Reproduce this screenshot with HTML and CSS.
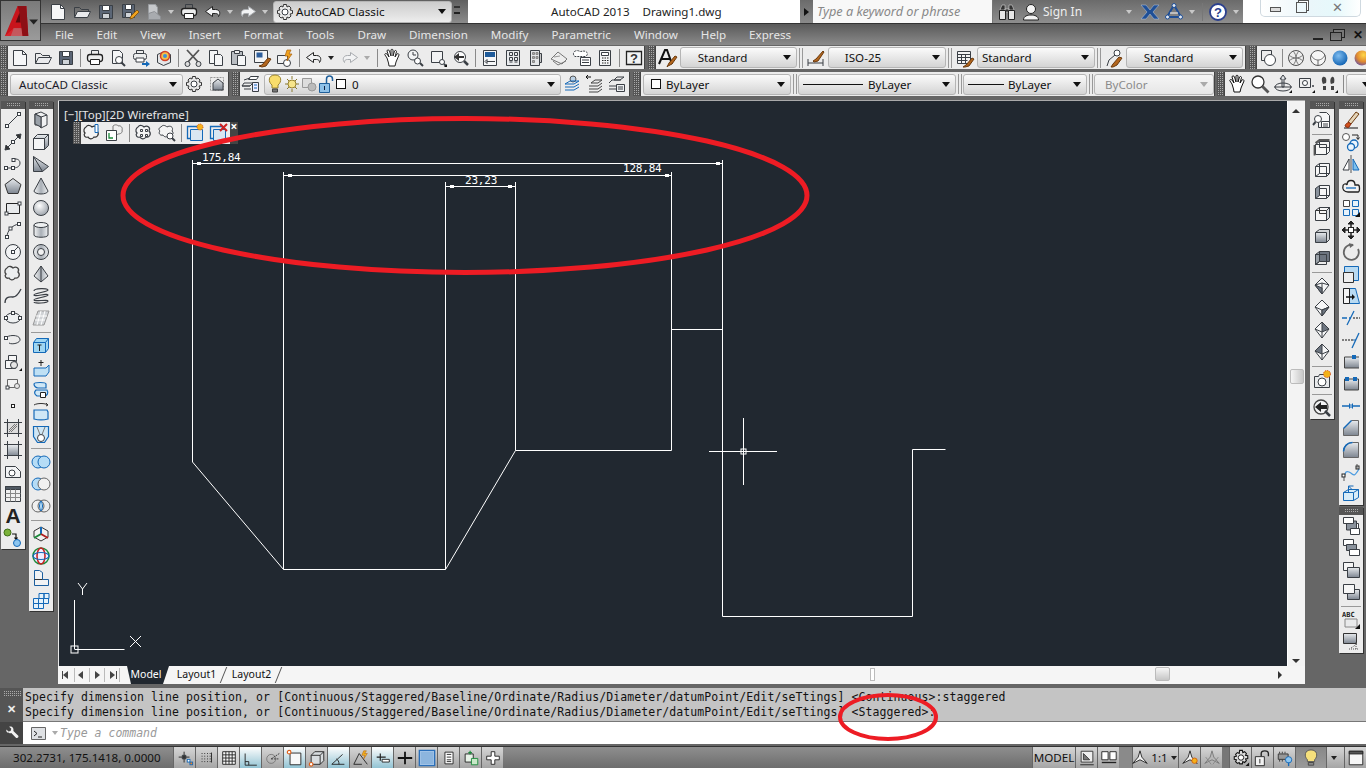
FILE: index.html
```html
<!DOCTYPE html>
<html lang="en">
<head>
<meta charset="utf-8">
<title>AutoCAD 2013 - Drawing1.dwg</title>
<link rel="stylesheet" href="styles.css">
</head>
<body>
<svg class="defs" aria-hidden="true">
<defs>
<linearGradient id="gm" x1="0" y1="0" x2="0" y2="1"><stop offset="0" stop-color="#e8ebee"/><stop offset="1" stop-color="#7d8590"/></linearGradient>
<linearGradient id="gh" x1="0" y1="0" x2="1" y2="0"><stop offset="0" stop-color="#f4f5f6"/><stop offset=".5" stop-color="#a9afb6"/><stop offset="1" stop-color="#eef0f2"/></linearGradient>
<radialGradient id="gs" cx=".4" cy=".35" r=".7"><stop offset="0" stop-color="#fff"/><stop offset="1" stop-color="#9aa1a9"/></radialGradient>
<radialGradient id="gb" cx=".4" cy=".35" r=".7"><stop offset="0" stop-color="#7fbdf0"/><stop offset="1" stop-color="#0d5fb0"/></radialGradient>
<radialGradient id="go" cx=".6" cy=".3" r=".8"><stop offset="0" stop-color="#ffd84a"/><stop offset=".55" stop-color="#e08a30"/><stop offset="1" stop-color="#5a4ab0"/></radialGradient>
<symbol id="new" viewBox="0 0 20 20"><path d="M3.500 2.500h9l4 4v11h-13z" fill="#f5f6f7"/><path d="M12.500 2.500v4h4"/></symbol>
<symbol id="open" viewBox="0 0 20 20"><path d="M2.500 15.500v-10h5l2 2h7v2"/><path d="M2.500 15.500l3-6h13l-3 6z" fill="#e9eaec"/></symbol>
<symbol id="save" viewBox="0 0 20 20"><path d="M3.500 3.500h13v13h-13z" fill="#5b6676"/><path d="M6.500 3.500h7v5h-7z" fill="#fff"/><path d="M6.500 11.500h7v5h-7z" fill="#cfd3d8"/></symbol>
<symbol id="saveas" viewBox="0 0 20 20"><path d="M2.500 2.500h12v13h-12z" fill="#5b6676"/><path d="M5.500 2.500h6v5h-6z" fill="#fff"/><path d="M5.500 10.500h6v5h-6z" fill="#cfd3d8"/><path d="M10 17l1-3 6-6 2 2-6 6z" fill="#f0a21e" stroke="#8a5a10"/></symbol>
<symbol id="plotg" viewBox="0 0 20 20"><path d="M4.500 2.500h7l2 3v6h-9z" fill="#c6c8cb" stroke="#9a9da1"/><path d="M4.500 17.500v-6l6-2 6 5v3z" fill="#a8abaf" stroke="#8e9195"/></symbol>
<symbol id="print" viewBox="0 0 20 20"><path d="M6.500 6.500v-4h7v4"/><rect x="2.500" y="6.500" width="15" height="7" rx="2.500" fill="#eceded" stroke="#222" stroke-width="1.300"/><path d="M5.500 11.500h9v5h-9z" fill="#fff" stroke="#222"/></symbol>
<symbol id="preview" viewBox="0 0 20 20"><path d="M4.500 2.500h7l3 3v10h-10z" fill="#f5f6f7"/><circle cx="11" cy="12" r="3.500" fill="#fff"/><path d="M13.500 14.500l3.500 3.500" stroke-width="2"/></symbol>
<symbol id="plot" viewBox="0 0 20 20"><path d="M5.500 5.500v-3h7v3"/><rect x="2.500" y="5.500" width="13" height="6" rx="2" fill="#eceded"/><path d="M5 10h8v4H5z" fill="#fff"/><path d="M11 15h4v-2l4 3-4 3v-2h-4z" fill="#1469b8" stroke="none"/></symbol>
<symbol id="d3" viewBox="0 0 20 20"><path d="M3.500 6.500l7-3 6 3v8l-7 3-6-3z" fill="#e4e6e8"/><circle cx="11" cy="8" r="4.500" fill="#f6c14a" stroke="#d2412a" stroke-width="1.500"/><circle cx="11" cy="8" r="2" fill="#3f8fd6" stroke="none"/></symbol>
<symbol id="cut" viewBox="0 0 20 20"><path d="M4 2l12 13M16 2L4 15" stroke="#555" stroke-width="1.800"/><circle cx="4.500" cy="16" r="2.500" fill="#ddd"/><circle cx="15.500" cy="16" r="2.500" fill="#ddd"/></symbol>
<symbol id="copy" viewBox="0 0 20 20"><path d="M3.500 2.500h8v13h-8z" fill="#f5f6f7"/><path d="M8.500 6.500h6l2 2v9h-8z" fill="#f5f6f7"/></symbol>
<symbol id="paste" viewBox="0 0 20 20"><path d="M2.500 3.500h11v13h-11z" fill="#b9bdc2"/><path d="M5.500 2.500h5v3h-5z" fill="#eee"/><path d="M8.500 7.500h7l1 1v9h-8z" fill="#f5f6f7"/></symbol>
<symbol id="match" viewBox="0 0 20 20"><path d="M2.500 2.500h13v12h-13z" fill="#f4f4f4"/><path d="M4.500 4.500h6v5h-6z" fill="#2f5f9c" stroke="none"/><path d="M7 18l3-1 6-7 3 1-5 7-4 1z" fill="#b3661d" stroke="#6b3a0e"/></symbol>
<symbol id="block" viewBox="0 0 20 20"><path d="M2.500 7.500h10v8h-10z" fill="#f2f2f2"/><circle cx="12" cy="15" r="3.500" fill="#fff"/><path d="M12 2l-2 6h3l-1 5 5-7h-3l2-4z" fill="#f0a21e" stroke="#a8600f" stroke-width=".7"/></symbol>
<symbol id="undo" viewBox="0 0 20 20"><path d="M9.500 4.500l-7 5 7 5v-3h3c3 0 3 2 3 3 2-2 2-7-3-7h-3z" fill="#f2f3f4" stroke="#222"/></symbol>
<symbol id="redo" viewBox="0 0 20 20"><path d="M10.500 4.500l7 5-7 5v-3h-3c-3 0-3 2-3 3-2-2-2-7 3-7h3z" fill="#f2f3f4" stroke="#a8abaf"/></symbol>
<symbol id="pan" viewBox="0 0 20 20"><path d="M5 10L3 7c-1-1 1-2 2-1l2 3-2-6c0-1.500 2-1.500 2.500 0L9 8V2c0-1 2-1 2 0v6l1.500-5c.5-1 2-.5 2 .5L13 9l2-3c1-1 2 0 2 1l-3 7-1 4H7l-.5-3z" fill="#fff" stroke="#222"/></symbol>
<symbol id="zrt" viewBox="0 0 20 20"><circle cx="8" cy="7" r="5" fill="#f2f3f4"/><path d="M8 4v3h3"/><circle cx="12.500" cy="13" r="3" fill="#fff"/><path d="M15 15l3 3" stroke-width="2"/></symbol>
<symbol id="zwin" viewBox="0 0 20 20"><path d="M3.500 3.500h11v11h-11z" fill="#f2f3f4"/><circle cx="14" cy="14" r="2.500" fill="#fff"/><path d="M16 16l2 2" stroke-width="2"/><path d="M16 19h3v-3z" fill="#111" stroke="none"/></symbol>
<symbol id="zprev" viewBox="0 0 20 20"><circle cx="9" cy="9" r="5.500" fill="#fff"/><path d="M3 9l5-4v3h5v2H8v3z" fill="#333" stroke="none"/><path d="M13 13l4 4" stroke-width="2.500"/></symbol>
<symbol id="props" viewBox="0 0 20 20"><path d="M3.500 2.500h13v15h-13z" fill="#f6f7f8"/><path d="M5 4h10v5H5z" fill="#1f5b9a" stroke="none"/><path d="M7 13.500h8M5 13.500l2-2v4z"/></symbol>
<symbol id="dc" viewBox="0 0 20 20"><path d="M3.500 2.500h13v15h-13z" fill="#e9ebed"/><path d="M6.500 4.500h3v3h-3zM11.500 4.500h3v3h-3zM6.500 9.500h3v3h-3zM11.500 9.500h3v3h-3zM6.500 14h3M11.500 14h3"/></symbol>
<symbol id="tp" viewBox="0 0 20 20"><path d="M4.500 2.500h9v15h-9z" fill="#e4e6e8"/><path d="M6.500 4.500h2v2h-2zM10 4.500h2v2h-2zM6.500 8.500h2v2h-2zM10 8.500h2v2h-2zM6.500 12.500h2v2h-2z" fill="#aaa" stroke="#888"/><path d="M13.500 5.500h2v9h-2z" fill="#c8c8c8"/></symbol>
<symbol id="ssm" viewBox="0 0 20 20"><path d="M2 11l7-7 9 7-5 5z" fill="#eee" stroke="#777"/><path d="M4 13l5 4 8-4" stroke="#777"/><path d="M5 9l6-1" stroke="#999"/></symbol>
<symbol id="mark" viewBox="0 0 20 20"><path d="M2.500 3.500c3-2 5 0 6 0 2 0 3-1 5 0 3 1 2 4 0 5H3c-2-1-2-4-.5-5z" fill="#fff" stroke-dasharray="2 1"/><path d="M8.500 9.500h10v8h-10z" fill="#fff"/><path d="M10 12h7M10 14.500h7" /></symbol>
<symbol id="calc" viewBox="0 0 20 20"><path d="M4.500 2.500h11v15h-11z" fill="#f3f4f5"/><path d="M6.500 4.500h7v3h-7z" fill="#fff"/><path d="M7 10h1.500M9.500 10H11M12 10h1.500M7 12.500h1.500M9.500 12.500H11M12 12.500h1.500M7 15h1.500M9.500 15H11M12 15h1.500" stroke="#222"/></symbol>
<symbol id="help" viewBox="0 0 20 20"><path d="M2.500 3.500h15v13h-15z" fill="#f1f2f3" stroke="#222" stroke-width="1.300"/><text x="10" y="15" class="svt" font-size="13" font-weight="700" text-anchor="middle" fill="#333" stroke="none">?</text></symbol>
<symbol id="txts" viewBox="0 0 20 20"><path d="M1 16L7 2h2l5 14M4 11h8" stroke="#111" stroke-width="2"/><path d="M9 19l2-4 6-7 2 1-5 7-4 2z" fill="#b3661d" stroke="#6b3a0e"/></symbol>
<symbol id="dims" viewBox="0 0 20 20"><path d="M2 11v7M17 11v7M2 15h15" /><path d="M7 13l3-2 7-8 1 1-6 9-4 1z" fill="#b3661d" stroke="#6b3a0e"/></symbol>
<symbol id="tbls" viewBox="0 0 20 20"><path d="M2.500 3.500h13v12h-13zM2.500 6.500h13M2.500 9.500h13M2.500 12.500h10M6.500 6.500v9M10.500 6.500v9" fill="#f4f4f4"/><path d="M8 19l3-2 6-7 2 1-5 7-4 1z" fill="#b3661d" stroke="#6b3a0e"/></symbol>
<symbol id="mls" viewBox="0 0 20 20"><circle cx="13" cy="5" r="3" fill="#fff"/><path d="M11 7L5 12l-2 6"/><path d="M7 19l2-3 6-7 3 1-5 7-4 2z" fill="#b3661d" stroke="#6b3a0e"/></symbol>
<symbol id="vis" viewBox="0 0 20 20"><path d="M3.500 2.500h10v10h-10z"/><circle cx="12" cy="12" r="5.500" fill="#fff"/></symbol>
<symbol id="wire" viewBox="0 0 20 20"><circle cx="10" cy="10" r="7.500" fill="#eee" stroke="#555"/><path d="M3 7c4 4 10 4 14 0M3 13c4-4 10-4 14 0M7 3c4 4 4 10 0 14M13 3c-4 4-4 10 0 14" stroke="#777"/></symbol>
<symbol id="hid" viewBox="0 0 20 20"><circle cx="10" cy="10" r="7.500" fill="#f6f6f6" stroke="#555"/><path d="M3 7c2 4 5 5 7 5s5-1 7-5M10 12v5" stroke="#666"/></symbol>
<symbol id="sph" viewBox="0 0 20 20"><circle cx="10" cy="10" r="7.500" fill="url(#gb)" stroke="none"/></symbol>
<symbol id="sph2" viewBox="0 0 20 20"><circle cx="10" cy="10" r="7.500" fill="url(#go)" stroke="none"/></symbol>
<symbol id="gearg" viewBox="0 0 20 20"><circle cx="10" cy="10" r="3" fill="#fff"/><path d="M8.500 2.500h3l.5 2.500 2-1 2 2-1 2 2.500.5v3l-2.500.5 1 2-2 2-2-1-.5 2.500h-3L8 15l-2 1-2-2 1-2-2.500-.5v-3L5 8 4 6l2-2 2 1z" stroke="#333" fill="#e8e8e8"/><circle cx="10" cy="10" r="3" fill="#fff"/></symbol>
<symbol id="wsp" viewBox="0 0 20 20"><path d="M3.500 3.500h13v13h-13z" stroke="#999" stroke-dasharray="2 1"/><path d="M6 16V9l5-4 5 4v7z" fill="url(#gm)"/></symbol>
<symbol id="lay" viewBox="0 0 20 20"><path d="M9.500 2.500h8l-2 3h-8z" fill="#fff"/><path d="M3 6l6-2M3 9h9l-3 3H1zM1 12h8M3 15h7" /><path d="M11.500 8.500h6v9h-6z" fill="#eef"/><path d="M13 11h3M13 14h3" stroke="#1469b8"/></symbol>
<symbol id="bulb" viewBox="0 0 16 20"><path d="M8 1c-7 0-7 7-3 10v3h6v-3c4-3 4-10-3-10z" fill="#f9dd6c" stroke="#9a8430"/><path d="M5.500 15h5v3h-5z" fill="#777" stroke="#444"/></symbol>
<symbol id="sun" viewBox="0 0 16 20"><circle cx="8" cy="10" r="4" fill="#f7e58c" stroke="#9a8430"/><path d="M8 2v3M8 15v3M1 10h3M12 10h3M3 5l2 2M13 5l-2 2M3 15l2-2M13 15l-2-2" stroke="#8a7a30"/></symbol>
<symbol id="frz" viewBox="0 0 16 20"><path d="M1.500 4.500h9v9h-9z" stroke="#999" fill="#ddd"/><circle cx="11" cy="13" r="4" fill="#bbb" stroke="#999"/></symbol>
<symbol id="lock" viewBox="0 0 16 20"><path d="M1.500 9.500h10v9h-10z" fill="#8ec1e8" stroke="#1f5f9a"/><path d="M8.500 9V5c0-4 6-4 6 0v2" stroke="#1f5f9a" stroke-width="1.500"/><path d="M6.500 12v4" stroke="#124"/></symbol>
<symbol id="lmk" viewBox="0 0 20 20"><circle cx="11" cy="5" r="3" fill="#bcd2e6" stroke="#555"/><path d="M3 10l5-3h9l-5 3zM3 13h9l5-3M3 16h9l5-3" stroke="#1469b8" fill="none"/></symbol>
<symbol id="lprev" viewBox="0 0 20 20"><path d="M2 3h5M2 3l2-2M2 3l2 2" stroke="#111"/><path d="M7 9l4-3h7l-4 3zM5 12h9l4-3M5 15h9l4-3M5 18h9l4-3" stroke="#444"/></symbol>
<symbol id="lst" viewBox="0 0 20 20"><path d="M8 6l3-3h7l-4 3zM3 9l3-3h9M3 12h7M3 15h7"/><path d="M10.500 10.500h8v7h-8z" fill="#eef0f2"/><path d="M12 13h5M12 15h5"/></symbol>
<symbol id="pan2" viewBox="0 0 20 20"><path d="M5 10L3 7c-1-1 1-2 2-1l2 3-2-6c0-1.500 2-1.500 2.500 0L9 8V2c0-1 2-1 2 0v6l1.500-5c.5-1 2-.5 2 .5L13 9l2-3c1-1 2 0 2 1l-3 7-1 4H7l-.5-3z" fill="#fff" stroke="#111"/></symbol>
<symbol id="zm" viewBox="0 0 20 20"><circle cx="8" cy="8" r="6" fill="#fff" stroke="#333" stroke-width="1.300"/><path d="M12.500 12.500l6 6" stroke="#555" stroke-width="2.800"/></symbol>
<symbol id="orb" viewBox="0 0 20 20"><path d="M10 1l-3 4h2v8h2V5h2z" fill="#dfe2e5"/><ellipse cx="10" cy="13" rx="8" ry="4"/><path d="M1 13h18"/><path d="M16 19h3v-3z" fill="#111" stroke="none"/></symbol>
<symbol id="cam" viewBox="0 0 20 20"><path d="M3.500 4.500h11v9h-11z" fill="#f0f0f0"/><circle cx="9" cy="9" r="2.500" fill="#fff"/><path d="M16 12h2M17 11v2"/><path d="M16 19h3v-3z" fill="#111" stroke="none"/></symbol>
<symbol id="feet" viewBox="0 0 20 20"><path d="M4 3c3-1 4 3 3 6l-3 1c-1-2-2-6 0-7zM13 3c2-1 3 3 2 6l-3 1c-1-2-1-6 1-7zM4 12h3v4H4zM12 12h3v4h-3z" fill="#444" stroke="none"/><path d="M16 19h3v-3z" fill="#111" stroke="none"/></symbol>
<symbol id="rc1" viewBox="0 0 20 20"><path d="M4 4c2-3 5-1 6 0 3-2 7 0 5 4 3 3 0 7-3 6-2 3-5 2-6 0-3 1-5-2-3-4-2-2-1-5 1-6z" fill="#f4f4f4" stroke="#333" stroke-width="1.200"/><path d="M13 1.500h3v8h-3z" fill="#fff" stroke="#1469b8"/></symbol>
<symbol id="rc2" viewBox="0 0 20 20"><path d="M8 3c2-2 5-1 5 0 3-1 5 2 4 4 1 3-2 4-4 4-2 2-5 1-5 0z" fill="#eee" stroke="#777"/><path d="M1.500 7.500h10v10h-10z" fill="#fff"/><path d="M4 10v5h4" stroke="#1a8a3a" stroke-width="1.300"/></symbol>
<symbol id="rc3" viewBox="0 0 20 20"><path d="M4 4c2-3 5-1 6 0 3-2 7 0 5 4 3 3 0 7-3 6-2 3-5 2-6 0-3 1-5-2-3-4-2-2-1-5 1-6z" fill="#f4f4f4" stroke-width="1.200"/><path d="M6.500 6.500h2v2h-2zM11.500 6.500h2v2h-2zM6.500 11.500h2v2h-2zM11.500 11.500h2v2h-2z"/></symbol>
<symbol id="rc4" viewBox="0 0 20 20"><path d="M4 4c2-3 5-1 6 0 3-2 7 0 5 4 3 3-1 5-3 4-2 3-5 2-6 0-3 1-5-2-3-4-2-2-1-3 1-4z" fill="#f4f4f4"/><circle cx="13" cy="13" r="3" fill="#fff"/><path d="M15 15l3 3" stroke-width="2"/></symbol>
<symbol id="vp1" viewBox="0 0 20 20"><path d="M1.500 3.500h12v12h-12z" stroke="#1469b8" stroke-width="1.300"/><path d="M4.500 6.500h12v11h-12z" fill="#d9e6f2" stroke="#1469b8"/><circle cx="14" cy="4" r="3" fill="#f6b21a" stroke="#d0501a" stroke-dasharray="1 1"/></symbol>
<symbol id="vp2" viewBox="0 0 20 20"><path d="M1.500 3.500h12v12h-12z" stroke="#1469b8" stroke-width="1.300"/><path d="M4.500 6.500h12v11h-12z" fill="#d9e6f2" stroke="#1469b8"/><path d="M11 1l7 7M18 1l-7 7" stroke="#cc2222" stroke-width="2"/></symbol>
<symbol id="line" viewBox="0 0 20 20"><path d="M4 16L16 4"/><rect x="2.500" y="14.500" width="3" height="3" fill="#fff"/><rect x="14.500" y="2.500" width="3" height="3" fill="#fff"/></symbol>
<symbol id="xline" viewBox="0 0 20 20"><path d="M2 18L18 2"/><path d="M2 18l1-5 4 4zM18 2l-5 1 4 4z" fill="#333"/><rect x="8.500" y="8.500" width="3" height="3" fill="#fff"/></symbol>
<symbol id="pline" viewBox="0 0 20 20"><path d="M3 14h7c3 0 7-1 7-5s-5-5-7-3"/><rect x="1.500" y="12.500" width="3" height="3" fill="#fff"/><rect x="8.500" y="12.500" width="3" height="3" fill="#fff"/><rect x="9" y="4.500" width="3" height="3" fill="#fff"/></symbol>
<symbol id="poly" viewBox="0 0 20 20"><path d="M10 2.500l8 6-3 9H5l-3-9z" fill="url(#gm)" stroke="#333"/></symbol>
<symbol id="rect" viewBox="0 0 20 20"><path d="M3.500 5.500h13v10h-13z" fill="#e8eaec" stroke="#222"/><rect x="2" y="14" width="3" height="3" fill="#fff"/><rect x="15" y="4" width="3" height="3" fill="#fff"/></symbol>
<symbol id="arc" viewBox="0 0 20 20"><path d="M4 17c0-6 5-12 12-13"/><rect x="2.500" y="15.500" width="3" height="3" fill="#fff"/><rect x="6" y="7" width="3" height="3" fill="#fff"/><rect x="14.500" y="2.500" width="3" height="3" fill="#fff"/></symbol>
<symbol id="circ" viewBox="0 0 20 20"><circle cx="10" cy="10" r="7.500" fill="#f2f3f4"/><path d="M10 10l5-5"/><rect x="8.500" y="8.500" width="3" height="3" fill="#fff"/></symbol>
<symbol id="cloud" viewBox="0 0 20 20"><path d="M4 4c2-3 5-1 6 0 3-2 7 0 5 4 3 3 0 7-3 6-2 3-5 2-6 0-3 1-5-2-3-4-2-2-1-5 1-6z" fill="#eceeef" stroke="#444" stroke-width="1.300"/></symbol>
<symbol id="spl" viewBox="0 0 20 20"><path d="M2 17c0-7 5-6 8-6s6-4 8-8" stroke-width="1.300"/></symbol>
<symbol id="ell" viewBox="0 0 20 20"><ellipse cx="10" cy="10" rx="7.500" ry="5" fill="#eef0f1"/><rect x="1.500" y="8.500" width="3" height="3" fill="#fff"/><rect x="15.500" y="8.500" width="3" height="3" fill="#fff"/><rect x="8.500" y="3.500" width="3" height="3" fill="#fff"/></symbol>
<symbol id="earc" viewBox="0 0 20 20"><path d="M3 8c1-3 13-4 14 1 1 4-8 6-11 4"/><rect x="1.500" y="6.500" width="3" height="3" fill="#fff"/></symbol>
<symbol id="ins" viewBox="0 0 20 20"><path d="M5.500 3.500h8v6h-8z" fill="#f6f6f6"/><path d="M2.500 8.500h10v8h-10z" fill="#f6f6f6"/><circle cx="11" cy="13" r="3.500" fill="#e6e6e6"/><path d="M16 19h3v-3z" fill="#111" stroke="none"/></symbol>
<symbol id="mkb" viewBox="0 0 20 20"><path d="M4.500 5.500h10v8h-10z" fill="#f2f2f2" stroke="#666"/><circle cx="14" cy="12" r="2.500" fill="#e8e8e8" stroke="#666"/><rect x="3" y="12" width="3" height="3" fill="#fff"/></symbol>
<symbol id="pt" viewBox="0 0 20 20"><rect x="8.500" y="8.500" width="3" height="3" fill="#fff" stroke="#222"/></symbol>
<symbol id="hat" viewBox="0 0 20 20"><path d="M3 5h14v11H3z" fill="#dcdcdc" stroke="none"/><path d="M1 4.500h18M1 15.500h18M4.500 1v18M15.500 1v18"/><path d="M6 14l8-8M8 14l6-6M6 12l6-6" stroke="#777"/></symbol>
<symbol id="grd" viewBox="0 0 20 20"><path d="M4 5h12v11H4z" fill="url(#gm)" stroke="none"/><path d="M1 4.500h18M1 15.500h18M4.500 1v18M15.500 1v18"/></symbol>
<symbol id="reg" viewBox="0 0 20 20"><path d="M2.500 4.500h10l5 5v6h-15z" fill="#f3f4f5"/><circle cx="9" cy="11" r="3" fill="#fff"/></symbol>
<symbol id="tab" viewBox="0 0 20 20"><path d="M2.500 2.500h15v15h-15z" fill="#f0f0f0"/><path d="M2.500 2.500h15v3h-15z" fill="#4f5862"/><path d="M2.500 9.500h15M2.500 13.500h15M7.500 5.500v12M12.500 5.500v12" stroke="#888"/></symbol>
<symbol id="ad" viewBox="0 0 20 20"><circle cx="4.500" cy="4.500" r="3.500" fill="#7bb23a" stroke="#3e6e18"/><path d="M9 6h4v5M11.500 9.500l1.500 2 1.500-2" stroke="#111" stroke-width="1.200"/><circle cx="14" cy="15" r="3.500" fill="#8ec6f0" stroke="#1469b8"/></symbol>
<symbol id="m1" viewBox="0 0 20 20"><path d="M4 4l6-2 6 3v10l-6 3-2-3H4z" fill="#f0f1f2"/><path d="M10 7l6-2M10 7v11M4 4l6 3" /><path d="M4 4v10l6 3V7z" fill="#99a0a8"/></symbol>
<symbol id="box" viewBox="0 0 20 20"><path d="M2.500 6.500l4-4h11v11l-4 4h-11z" fill="url(#gm)"/><path d="M2.500 6.500h11v11M13.500 6.500l4-4"/><path d="M2.500 6.500h11v11h-11z" fill="#f4f5f6"/></symbol>
<symbol id="wdg" viewBox="0 0 20 20"><path d="M2.500 2.500l15 10-6 5h-9z" fill="url(#gm)"/><path d="M2.500 2.500l9 15"/></symbol>
<symbol id="cone" viewBox="0 0 20 20"><path d="M10 2L3 15a7 3 0 0 0 14 0z" fill="url(#gh)"/></symbol>
<symbol id="spr" viewBox="0 0 20 20"><circle cx="10" cy="10" r="7.500" fill="url(#gs)"/></symbol>
<symbol id="cyl" viewBox="0 0 20 20"><path d="M3 5v10c0 3 14 3 14 0V5" fill="url(#gh)"/><ellipse cx="10" cy="5" rx="7" ry="2.500" fill="#eef0f1"/></symbol>
<symbol id="tor" viewBox="0 0 20 20"><circle cx="10" cy="10" r="7.500" fill="url(#gh)"/><circle cx="10" cy="10" r="3.500" fill="#f2f2f2"/></symbol>
<symbol id="pyr" viewBox="0 0 20 20"><path d="M10 2L3 12l7 6 7-6z" fill="url(#gh)"/><path d="M10 2v16"/></symbol>
<symbol id="hel" viewBox="0 0 20 20"><path d="M3 5c0-3 14-3 14-1S3 7 3 9s14-2 14 0-14 3-14 5 14-1 14 1-14 3-14 1" stroke-width="1.200"/></symbol>
<symbol id="psf" viewBox="0 0 20 20"><path d="M7 3h11l-5 14H2z" fill="#d0d3d6" stroke="#999"/><path d="M5 8h11M4 12h10M10 3l-4 14M14 3l-4 14" stroke="#fff"/></symbol>
<symbol id="prs" viewBox="0 0 20 20"><path d="M2.500 6.500l3-4h12v10l-3 4h-12z" fill="#9fd6f2" stroke="#1469b8"/><path d="M2.500 6.500h12v10M14.500 6.500l3-4" stroke="#1469b8"/><path d="M8.500 15V9M6.500 9h4" stroke="#222"/></symbol>
<symbol id="ext" viewBox="0 0 20 20"><path d="M3 10h12l3-3v7l-3 4H3z" fill="#bfe0f4" stroke="#1469b8"/><path d="M10 8V2M7.500 4.500h5" stroke="#222"/></symbol>
<symbol id="swp" viewBox="0 0 20 20"><path d="M3 4c0-2 12-2 12 0v4H7c-2 0-4-2-4-4zM5 10h11c2 3 0 6-3 6H6c-3-2-3-4-1-6z" fill="#cfe7f6" stroke="#1469b8" stroke-width="1.200"/><path d="M9.500 12.500h5v5h-5z" fill="#fff" stroke="#222"/></symbol>
<symbol id="rev" viewBox="0 0 20 20"><path d="M3 3c3-2 11-2 14 0M15 1l2 2-2 1" stroke="#333"/><path d="M3 8h13l1 2v7c-4 1-10 1-14 0z" fill="#cfe7f6" stroke="#1469b8" stroke-width="1.200"/></symbol>
<symbol id="lft" viewBox="0 0 20 20"><path d="M2.500 2.500h15v10l-4 6h-7l-4-6z" fill="#cfe7f6" stroke="#1469b8" stroke-width="1.200"/><path d="M6 3l4 10 4-10" stroke="#777"/><circle cx="10" cy="14" r="3.500" fill="#fff"/></symbol>
<symbol id="uni" viewBox="0 0 20 20"><circle cx="7" cy="10" r="6" fill="#b5dcf6" stroke="#1469b8"/><circle cx="13" cy="10" r="6" fill="#b5dcf6" stroke="#1469b8"/></symbol>
<symbol id="sub" viewBox="0 0 20 20"><circle cx="7" cy="10" r="6" fill="#b5dcf6" stroke="#1469b8"/><circle cx="13" cy="10" r="6" fill="#f0f0f0" stroke="#666"/></symbol>
<symbol id="its" viewBox="0 0 20 20"><circle cx="7" cy="10" r="6" fill="#f0f0f0" stroke="#666"/><circle cx="13" cy="10" r="6" fill="none" stroke="#666"/><path d="M10 5c2 3 2 7 0 10-2-3-2-7 0-10z" fill="#b5dcf6" stroke="#1469b8"/></symbol>
<symbol id="gz3" viewBox="0 0 20 20"><path d="M10 3l7 4v6l-7 4-7-4V7z" stroke="#333" fill="#f2f2f2"/><path d="M10 10V3" stroke="#1469b8" stroke-width="2"/><path d="M10 10L3 14" stroke="#1a8a3a" stroke-width="2"/><path d="M10 10l7 4" stroke="#b02020" stroke-width="2"/></symbol>
<symbol id="gr3" viewBox="0 0 20 20"><circle cx="10" cy="10" r="8" stroke="#1a8a3a" stroke-width="1.500" fill="#eef"/><ellipse cx="10" cy="10" rx="4" ry="8" stroke="#c72020" stroke-width="1.500"/><ellipse cx="10" cy="10" rx="8" ry="3.500" stroke="#1469b8" stroke-width="1.200"/></symbol>
<symbol id="ply" viewBox="0 0 20 20"><path d="M3.500 2.500v15h14v-6h-6v-7l-3-2z" fill="#f2f3f4" stroke="#1d5f9e"/><path d="M3.500 11.500h8" stroke="#333"/></symbol>
<symbol id="arr3" viewBox="0 0 20 20"><path d="M2.500 8.500h5v5h-5zM7.500 8.500h5v5h-5zM2.500 13.500h5v5h-5zM7.500 13.500h5v5h-5zM8 3.500h5v5H8zM13 3.500h5v5h-5zM12.500 8.500h5v5h-5z" stroke="#1469b8" fill="#e5f2fb"/></symbol>
<symbol id="c1" viewBox="0 0 20 20"><path d="M3.500 6.500l4-3h10v10l-3 3h-11z" fill="#f6f6f6"/><path d="M7.500 3.500v6h10M3.500 6.500h11v10"/><path d="M2.500 7v10.500" stroke="#555" stroke-width="1.800"/><path d="M3.500 5l4-3h10" stroke="#555" stroke-width="1.800"/></symbol>
<symbol id="c2" viewBox="0 0 20 20"><path d="M3.500 6.500l4-3h10v10l-3 3h-11z" fill="#f6f6f6"/><path d="M7.500 3.500v10h10M3.500 6.500h11v10"/><path d="M3.500 16.500l4-3"/></symbol>
<symbol id="c3" viewBox="0 0 20 20"><path d="M7.500 3.500h10v10l-3 3h-11" fill="#f6f6f6"/><path d="M3.500 6.500h11v10M7.500 13.500h10"/><path d="M3.500 6.500l4-3v10l-4 3z" fill="#8a929c"/></symbol>
<symbol id="c4" viewBox="0 0 20 20"><path d="M3.500 6.500l4-3h10v10l-3 3h-11z" fill="#f6f6f6"/><path d="M3.500 6.500h11v10M14.500 6.500l3-3M7.500 3.500v6M7.500 9.500h7" stroke="#333"/><path d="M14.500 6.500l3-3v10l-3 3z" fill="#d9dcdf"/></symbol>
<symbol id="c5" viewBox="0 0 20 20"><path d="M3.500 6.500l4-3h10v10l-3 3z" fill="#d0d3d6"/><path d="M3.500 6.500h11v10h-11z" fill="url(#gm)"/></symbol>
<symbol id="c6" viewBox="0 0 20 20"><path d="M7.500 3.500h10v10h-10z" fill="#6d7580"/><path d="M3.500 6.500l4-3v10l-4 3z" fill="#9aa1a8"/><path d="M3.500 6.500h11v10h-11z"/><path d="M3.500 16.500l4-3"/></symbol>
<symbol id="i1" viewBox="0 0 20 20"><path d="M10 2l7 7-7 9-7-9z" fill="#f6f7f8"/><path d="M3 9l7-2 7 2M10 7v11"/><path d="M3 9l7 9V12z" fill="#6d7580"/></symbol>
<symbol id="i2" viewBox="0 0 20 20"><path d="M10 2l7 7-7 9-7-9z" fill="#f6f7f8"/><path d="M3 9l7 3 7-3M10 12v6"/><path d="M10 12l7-3-7 9z" fill="#6d7580"/></symbol>
<symbol id="i3" viewBox="0 0 20 20"><path d="M10 2l7 7-7 9-7-9z" fill="#f6f7f8"/><path d="M10 2l7 7-7 3z" fill="#6d7580"/><path d="M3 9l7 3v6"/></symbol>
<symbol id="i4" viewBox="0 0 20 20"><path d="M10 2l7 7-7 9-7-9z" fill="#f6f7f8"/><path d="M10 2L3 9l7 3z" fill="#6d7580"/><path d="M17 9l-7 3v6"/></symbol>
<symbol id="cam2" viewBox="0 0 20 20"><path d="M2.500 6.500h4l1-2h5l1 2h4v11h-15z" fill="#e8eaec"/><circle cx="10" cy="12" r="4" fill="#fff"/><circle cx="15" cy="4" r="3.500" fill="#f2b21a" stroke="#d0401a" stroke-dasharray="1 1"/></symbol>
<symbol id="navw" viewBox="0 0 20 20"><circle cx="9" cy="9" r="7" fill="#f2f3f4" stroke="#444" stroke-width="1.300"/><path d="M3 9l6-5v3h6v4H9v3z" fill="#222" stroke="none"/><path d="M13 13l5 5" stroke-width="2.500"/></symbol>
<symbol id="expl" viewBox="0 0 20 20"><path d="M7.500 2.500h7l3 3v12h-11v-5" fill="#f5f6f7"/><circle cx="6" cy="9" r="3.500" fill="#fff"/><path d="M3.500 12L1 15" stroke-width="2"/><path d="M9.500 11.500h8v6h-8z" fill="#fff"/><path d="M11 14h5M11 16h5"/></symbol>
<symbol id="brsh" viewBox="0 0 20 20"><path d="M3 18h14" stroke="#111"/><path d="M7 12l8-10 3 2-8 10z" fill="#e4d4b8" stroke="#6b3a0e"/><path d="M4 16c1-3 3-4 5-3l1 1-2 3c-1 1-3 0-4-1z" fill="#d0501a" stroke="#8a2a0e"/></symbol>
<symbol id="cpy2" viewBox="0 0 20 20"><circle cx="5" cy="5" r="3.500" fill="#fff" stroke="#555"/><circle cx="13" cy="12" r="4" fill="#eaf4fc" stroke="#1469b8" stroke-width="1.300"/><circle cx="10" cy="15" r="3.500" fill="#eaf4fc" stroke="#1469b8" stroke-width="1.300"/><path d="M11 3h6v4M15.500 5.500L17 7.500l1.500-2" stroke="#222"/></symbol>
<symbol id="mir" viewBox="0 0 20 20"><path d="M10 1v18" stroke="#555"/><path d="M8 5L2 16h6z" fill="#fff"/><path d="M12 5l6 11h-6z" fill="#7cc0ee" stroke="#1469b8"/></symbol>
<symbol id="ofs" viewBox="0 0 20 20"><path d="M2 10c0-2 3-3 4-1 0-6 8-6 8 0h3c2 0 2 7 0 7H7c-4 0-6-3-5-6z" fill="#f2f2f2" stroke="#222" stroke-width="1.300"/><path d="M5 12h10" stroke="#1469b8" stroke-width="1.300"/></symbol>
<symbol id="arry" viewBox="0 0 20 20"><path d="M2.500 2.500h6v6h-6z" fill="#fff" stroke="#444"/><path d="M11.500 2.500h6v6h-6zM2.500 11.500h6v6h-6zM11.500 11.500h6v6h-6z" fill="#e6f2fb" stroke="#1469b8"/><path d="M14 19h5v-5z" fill="#111" stroke="none"/></symbol>
<symbol id="move" viewBox="0 0 20 20"><path d="M10 1l-3 3h6zM10 19l-3-3h6zM1 10l3-3v6zM19 10l-3-3v6z" fill="#222" stroke="#222"/><path d="M10 4v12M4 10h12" stroke-width="1.500" stroke="#222"/><rect x="7.500" y="7.500" width="5" height="5" fill="#fff" stroke="#222"/></symbol>
<symbol id="rot" viewBox="0 0 20 20"><path d="M12 3a7.500 7.500 0 1 0 5 4" stroke="#666" stroke-width="1.800"/><path d="M8 1l5 2-4 3z" fill="#666" stroke="none"/></symbol>
<symbol id="scl" viewBox="0 0 20 20"><path d="M3.500 2.500h14v14H3.500z" fill="#b8daf2" stroke="#1469b8"/><path d="M2.500 8.500h10v10h-10z" fill="#eee" stroke="#333"/></symbol>
<symbol id="str" viewBox="0 0 20 20"><path d="M2.500 2.500h12l4 15h-16z" fill="#b8daf2" stroke="#1469b8"/><path d="M2.500 2.500h6v15h-6z" fill="#f4f4f4" stroke="#222"/><path d="M5 11h7" stroke="#111" stroke-width="1.500"/><path d="M11 8l3 3-3 3z" fill="#111" stroke="none"/></symbol>
<symbol id="trm" viewBox="0 0 20 20"><path d="M1 10h5M8 10h2" stroke="#1469b8" stroke-width="1.300"/><path d="M12 10h7" stroke="#111" stroke-dasharray="2 1"/><path d="M6 17L13 3" stroke="#1469b8" stroke-width="1.300"/></symbol>
<symbol id="ex" viewBox="0 0 20 20"><path d="M1 10h11" stroke="#111" stroke-dasharray="2 1"/><path d="M12 10h3" stroke="#1469b8"/><path d="M11 18L18 3" stroke="#1469b8" stroke-width="1.300"/></symbol>
<symbol id="br1" viewBox="0 0 20 20"><path d="M18 5H3.500v11H18" fill="url(#gm)" stroke="#444"/><rect x="11" y="3" width="4" height="4" fill="#1469b8" stroke="none"/></symbol>
<symbol id="br2" viewBox="0 0 20 20"><path d="M3.500 5h14v11h-14z" fill="url(#gm)" stroke="#444"/><rect x="4" y="3" width="4" height="4" fill="#1469b8" stroke="none"/><rect x="12" y="3" width="4" height="4" fill="#1469b8" stroke="none"/></symbol>
<symbol id="jn" viewBox="0 0 20 20"><path d="M1 10h7M12 10h7" stroke="#1469b8" stroke-width="1.300"/><path d="M8 7v6l3-3zM12 7v6l-3-3z" fill="#1469b8" stroke="none"/></symbol>
<symbol id="chm" viewBox="0 0 20 20"><path d="M2.500 17.500v-7l8-8h7v15z" fill="url(#gm)" stroke="#666"/><path d="M2.500 10.500l8-8" stroke="#1469b8" stroke-width="1.500"/></symbol>
<symbol id="flt" viewBox="0 0 20 20"><path d="M2.500 17.500v-6c0-5 4-9 9-9h6v15z" fill="url(#gm)" stroke="#666"/><path d="M2.500 11.500c0-5 4-9 9-9" stroke="#1469b8" stroke-width="1.500" fill="none"/></symbol>
<symbol id="bln" viewBox="0 0 20 20"><path d="M2 15c3-1 1-7 6-5s4 7 10-3" stroke="#4a9be0" stroke-width="1.300"/><rect x="1" y="12" width="3" height="3" fill="#fff" stroke="#222"/><rect x="15" y="4" width="3" height="3" fill="#fff" stroke="#222"/><path d="M3 15v4M16 2v5" stroke="#555"/></symbol>
<symbol id="exb" viewBox="0 0 20 20"><path d="M2.500 8.500l5-3h10v8l-5 3h-10z" fill="#d8ecf8" stroke="#1469b8"/><path d="M2.500 8.500h10v8M12.500 8.500l5-3M7.500 8.500V2h5M7.500 2l3 3" stroke="#1469b8"/></symbol>
<symbol id="o1" viewBox="0 0 20 20"><path d="M8.500 7.500h9v6h-9z" fill="#fff"/><path d="M5.500 5h10v9h-10z" fill="#8a929c"/><path d="M2.500 1.500h10v6h-10z" fill="#fff"/><path d="M9.500 12.500h9v6h-9z" fill="#fff"/></symbol>
<symbol id="o2" viewBox="0 0 20 20"><path d="M2.500 1.500h10v6h-10z" fill="#fff"/><path d="M5.500 6.500h10v6h-10z" fill="#8a929c"/><path d="M8.500 11.500h10v6h-10z" fill="#fff"/></symbol>
<symbol id="o3" viewBox="0 0 20 20"><path d="M2.500 2.500h10v8h-10z" fill="#f6f6f6"/><path d="M6.500 7.500h12v10h-12z" fill="url(#gm)"/></symbol>
<symbol id="o4" viewBox="0 0 20 20"><path d="M6.500 7.500h12v10h-12z" fill="url(#gm)"/><path d="M2.500 2.500h11v9h-11z" fill="#f6f6f6"/></symbol>
<symbol id="abc" viewBox="0 0 20 20"><text x="1" y="7" class="svm" font-size="7" font-weight="700" fill="#222" stroke="none">ABC</text><path d="M4 9h12v8H4z" fill="#e9eaeb" stroke="#888"/><path d="M14 19h5v-5z" fill="#111" stroke="none"/></symbol>
<symbol id="msk" viewBox="0 0 20 20"><path d="M2.500 1.500h13v10h-13z" fill="url(#gm)" stroke="#333"/><path d="M8 17h10M15 10v8M10 16l6-4" stroke="#555" stroke-dasharray="1 1"/></symbol>
<symbol id="bino" viewBox="0 0 20 20"><path d="M3 8l2-5h3v5zM12 8V3h3l2 5zM8 7h4v3H8z" fill="#333" stroke="#e8e8e8" stroke-width=".5"/><path d="M2.500 8.500h6v9h-6zM11.500 8.500h6v9h-6z" fill="#e6e6e6" stroke="#222"/></symbol>
<symbol id="user" viewBox="0 0 20 20"><circle cx="10" cy="7" r="4.500" fill="#f4f4f4" stroke="#222"/><path d="M2.500 18c0-4 4-5 7.500-5s7.500 1 7.500 5z" fill="#f4f4f4" stroke="#222"/></symbol>
<symbol id="xch" viewBox="0 0 20 20"><path d="M1 3h5l4 5 4-5h5l-6 7 6 7h-5l-4-5-4 5H1l6-7z" fill="#1f4f96" stroke="#b8c8e0" stroke-width=".5"/></symbol>
<symbol id="tri" viewBox="0 0 20 20"><path d="M10 3l7 12H3z" fill="none" stroke="#1f4f96" stroke-width="2"/><path d="M6 11h8" stroke="#fff"/><circle cx="10" cy="3.500" r="2" fill="#dfe6f0" stroke="#1f4f96"/><circle cx="3.500" cy="15" r="2" fill="#dfe6f0" stroke="#1f4f96"/><circle cx="16.500" cy="15" r="2" fill="#dfe6f0" stroke="#1f4f96"/></symbol>
<symbol id="hlp" viewBox="0 0 20 20"><circle cx="10" cy="10" r="8" fill="#fff" stroke="#2a3f8e" stroke-width="1.800"/><text x="10" y="14.500" class="svt" font-size="13" font-weight="700" text-anchor="middle" fill="#2a3f8e" stroke="none">?</text></symbol>
<symbol id="cmd" viewBox="0 0 20 20"><path d="M3.500 4.500h14v12h-14z" fill="#dfe1e4" stroke="#666"/><path d="M6 8l3 2.500L6 13M10 14h4" stroke="#222"/></symbol>
<symbol id="st1" viewBox="0 0 20 20"><path d="M9 3v12M3 9h12" stroke="#222"/><path d="M7 7h4v4H7z" fill="#333"/><rect x="12.500" y="11.500" width="3" height="3" fill="#fff" stroke="#1469b8"/><rect x="15.500" y="14.500" width="3" height="3" fill="#f08020" stroke="#1469b8"/></symbol>
<symbol id="st2" viewBox="0 0 20 20"><path d="M4 5h11M4 8h11M4 11h11M4 14h11" stroke="#222" stroke-dasharray="1 2"/><path d="M15 4v11" stroke="#222"/></symbol>
<symbol id="st3" viewBox="0 0 20 20"><path d="M3 3h14v14H3z" fill="#f6f6f6" stroke="#222"/><path d="M3 6.500h14M3 10h14M3 13.500h14M6.500 3v14M10 3v14M13.500 3v14" stroke="#222"/></symbol>
<symbol id="st4" viewBox="0 0 20 20"><path d="M3.500 5v13h13M3.500 14h4v4" stroke="#222"/></symbol>
<symbol id="st5" viewBox="0 0 20 20"><circle cx="8" cy="11" r="5" stroke="#777" fill="none"/><path d="M8 11l9-6M8 11h9" stroke="#333" stroke-dasharray="2 1"/></symbol>
<symbol id="st6" viewBox="0 0 20 20"><path d="M4.500 4.500h12v13h-12z" fill="#f8f8f8" stroke="#222"/><circle cx="3.500" cy="3.500" r="2" fill="#fff" stroke="#e0601a" stroke-width="1.300"/></symbol>
<symbol id="st7" viewBox="0 0 20 20"><path d="M3.500 7l4-4h10v10l-4 4h-10z" fill="#d8dcdf" stroke="#222"/><path d="M3.500 7h10v10M13.500 7l4-4" stroke="#222"/><circle cx="3.500" cy="17" r="2" fill="#fff" stroke="#e0601a" stroke-width="1.300"/></symbol>
<symbol id="st8" viewBox="0 0 20 20"><path d="M2 17h14M2 17L14 6" stroke="#222"/><path d="M10 17c0-3-1-5-3-6" stroke="#222"/></symbol>
<symbol id="st9" viewBox="0 0 20 20"><path d="M2 17L8 5l9 12" stroke="#222" fill="none"/><path d="M2 17h9" stroke="#222"/><path d="M13 2l-2 5h3l-1 4 4-6h-3l2-3z" fill="#f6b21a" stroke="#b06010" stroke-width=".6"/></symbol>
<symbol id="st10" viewBox="0 0 20 20"><path d="M3 9h10M7 5v8" stroke="#222" stroke-width="1.300"/><path d="M9 11.500h8v3H9z" stroke="#222" fill="#fff"/></symbol>
<symbol id="st11" viewBox="0 0 20 20"><path d="M2 10h16M10 3v14" stroke="#111" stroke-width="2"/></symbol>
<symbol id="st12" viewBox="0 0 20 20"><path d="M1.500 1.500h17v17h-17z" fill="#a8c8ea" stroke="#2a6fba" stroke-width="1.500"/><path d="M3 3h14v14H3z" fill="#8cb5de" stroke="none"/></symbol>
<symbol id="st13" viewBox="0 0 20 20"><path d="M5.500 3.500h9v13h-9z" fill="#fff" stroke="#222"/><path d="M7.500 6h5M7.500 9h5M7.500 12h5M7.500 14h5" stroke="#222"/></symbol>
<symbol id="st14" viewBox="0 0 20 20"><path d="M3.500 5.500h9v9h-9z" fill="#e8f2e8" stroke="#222"/><path d="M7 4h4M9 2v4" stroke="#1a8a3a" stroke-width="1.300"/><path d="M10.500 10.500h7v7h-7z" fill="#c8e8c8" stroke="#1a8a3a"/></symbol>
<symbol id="st15" viewBox="0 0 20 20"><path d="M8 3h4v5h5v4h-5v5H8v-5H3V8h5z" fill="#fff" stroke="#222"/></symbol>
<symbol id="s1" viewBox="0 0 20 20"><path d="M2.500 17.500h15" stroke="#222"/><path d="M3.500 2.500h13v12h-13z" fill="#eee" stroke="#333"/><path d="M6 5v7h7z" fill="#777" stroke="#333"/></symbol>
<symbol id="s2" viewBox="0 0 20 20"><path d="M2 3h7v9H2zM11 3h7v9h-7z" fill="#fff" stroke="#222"/><path d="M2 15h16" stroke="#222" stroke-width="1.500"/></symbol>
<symbol id="an" viewBox="0 0 20 20"><path d="M10 2l2 7 6 7-8-4-8 4 6-7z" fill="#f2f2f2" stroke="#222"/></symbol>
<symbol id="an2" viewBox="0 0 20 20"><path d="M10 2l2 7 6 7-8-4-8 4 6-7z" fill="#f2f2f2" stroke="#222"/><circle cx="15" cy="13" r="3" fill="#f6b21a" stroke="#d06010"/></symbol>
<symbol id="an3" viewBox="0 0 20 20"><path d="M10 2l2 7 6 7-8-4-8 4 6-7z" fill="#b8b8b8" stroke="#777"/><path d="M3 9l6 8M17 9l-6 8" stroke="#888"/></symbol>
<symbol id="gear" viewBox="0 0 20 20"><path d="M8.500 1.500h3l.5 2.500 2-1 2 2-1 2 2.500.5v3l-2.500.5 1 2-2 2-2-1-.5 2.500h-3L8 15l-2 1-2-2 1-2-2.500-.5v-3L5 8 4 6l2-2 2 1z" stroke="#111" stroke-width="1.200" fill="#ddd"/><circle cx="10" cy="9.500" r="3" fill="#fff" stroke="#111"/><path d="M15 19h4v-4z" fill="#111" stroke="none"/></symbol>
<symbol id="plk" viewBox="0 0 20 20"><path d="M1.500 8.500h10v10h-10z" fill="#f2f2f2" stroke="#222"/><path d="M6.500 11v5" stroke="#222"/><path d="M8 8V5c0-4 8-4 8 0v3" stroke="#222" stroke-width="1.500"/></symbol>
<symbol id="hw" viewBox="0 0 20 20"><path d="M2.500 5.500h11v6h-11z" fill="#999" stroke="#333"/><path d="M4 3v2M7 3v2M10 3v2M4 12v2M7 12v2" stroke="#333"/><circle cx="14" cy="12" r="3.500" fill="#8ec6f0" stroke="#1469b8"/><path d="M14 15v4" stroke="#1469b8" stroke-width="1.500"/></symbol>
<symbol id="bulb2" viewBox="0 0 20 20"><path d="M10 1c-7 0-8 7-4 11v2h8v-2c4-4 3-11-4-11z" fill="#f6e07c" stroke="#555"/><path d="M7 15h6v3H7z" fill="#888" stroke="#444"/></symbol>
<symbol id="wnd" viewBox="0 0 20 20"><path d="M2.500 2.500h15v15h-15z" fill="#f6f6f6" stroke="#222"/><path d="M2.500 2.500h15v3h-15z" fill="#555" stroke="#222"/></symbol>
</defs>
</svg>

<header class="title">
  <div class="qat">
    <svg class="ic"><use href="#new"/></svg><svg class="ic"><use href="#open"/></svg><svg class="ic"><use href="#save"/></svg><svg class="ic"><use href="#saveas"/></svg><svg class="ic"><use href="#plotg"/></svg><span class="dd light"></span>
    <svg class="ic"><use href="#print"/></svg><svg class="ic"><use href="#undo"/></svg><span class="dd light"></span><svg class="ic"><use href="#redo"/></svg><span class="dd light"></span>
    <div class="combo wsq"><svg class="ic"><use href="#gearg"/></svg><span>AutoCAD Classic</span></div>
    <span class="qcust"></span>
  </div>
  <div class="doc"><span>AutoCAD 2013</span><span>Drawing1.dwg</span></div>
  <div class="sarrow"></div>
  <div class="search">Type a keyword or phrase</div>
  <div class="info">
    <svg class="ic"><use href="#bino"/></svg><svg class="ic"><use href="#user"/></svg>
    <span class="signin">Sign In</span><span class="dd light gapa"></span>
    <svg class="ic"><use href="#xch"/></svg><svg class="ic"><use href="#tri"/></svg><span class="dd light"></span><span class="vsep"></span>
    <svg class="ic"><use href="#hlp"/></svg><span class="dd light"></span>
  </div>
  <div class="win"><div class="winbox"><span class="wmin"></span><span class="wres"></span><span class="wcls">✕</span></div></div>
</header>

<nav class="menu">
  <span>File</span><span>Edit</span><span>View</span><span>Insert</span><span>Format</span><span>Tools</span><span>Draw</span><span>Dimension</span><span>Modify</span><span>Parametric</span><span>Window</span><span>Help</span><span>Express</span>
  <div class="mdi"><span class="mmin"></span><span class="mres"></span><span class="mcls">✕</span></div>
</nav>

<div class="row r1">
  <div class="tb t-std">
    <span class="grip"></span>
    <svg class="ic"><use href="#new"/></svg><svg class="ic"><use href="#open"/></svg><svg class="ic"><use href="#save"/></svg><span class="sp"></span>
    <svg class="ic"><use href="#print"/></svg><svg class="ic"><use href="#preview"/></svg><svg class="ic"><use href="#plot"/></svg><svg class="ic"><use href="#d3"/></svg><span class="sp"></span>
    <svg class="ic"><use href="#cut"/></svg><svg class="ic"><use href="#copy"/></svg><svg class="ic"><use href="#paste"/></svg><svg class="ic"><use href="#match"/></svg><svg class="ic"><use href="#block"/></svg><span class="sp"></span>
    <svg class="ic"><use href="#undo"/></svg><span class="dd"></span><svg class="ic"><use href="#redo"/></svg><span class="dd gray"></span><span class="sp"></span>
    <svg class="ic"><use href="#pan"/></svg><svg class="ic"><use href="#zrt"/></svg><svg class="ic"><use href="#zwin"/></svg><svg class="ic"><use href="#zprev"/></svg><span class="sp"></span>
    <svg class="ic"><use href="#props"/></svg><svg class="ic"><use href="#dc"/></svg><svg class="ic"><use href="#tp"/></svg><svg class="ic"><use href="#ssm"/></svg><svg class="ic"><use href="#mark"/></svg><svg class="ic"><use href="#calc"/></svg><span class="sp"></span>
    <svg class="ic"><use href="#help"/></svg>
  </div>
  <div class="tb t-sty">
    <span class="grip"></span>
    <svg class="ic"><use href="#txts"/></svg>
    <div class="combo w117 ctr pr32"><span>Standard</span></div><span class="dbl"></span>
    <svg class="ic"><use href="#dims"/></svg>
    <div class="combo w118 ctr pr48"><span>ISO-25</span></div><span class="dbl"></span>
    <svg class="ic"><use href="#tbls"/></svg>
    <div class="combo w118 ltxt t4"><span>Standard</span></div><span class="dbl"></span>
    <svg class="ic"><use href="#mls"/></svg>
    <div class="combo w117 ctr pr32"><span>Standard</span></div>
  </div>
  <div class="tb t-vis">
    <span class="grip"></span>
    <svg class="ic"><use href="#vis"/></svg><span class="sp"></span>
    <svg class="ic"><use href="#wire"/></svg><svg class="ic"><use href="#hid"/></svg><svg class="ic"><use href="#sph"/></svg><svg class="ic"><use href="#sph2"/></svg>
  </div>
</div>

<div class="row r2">
  <div class="tb t-ws">
    <span class="grip"></span>
    <div class="combo w173 ltxt big"><span>AutoCAD Classic</span></div>
    <svg class="ic m-l"><use href="#gearg"/></svg><svg class="ic"><use href="#wsp"/></svg>
  </div>
  <div class="tb t-lay">
    <span class="grip"></span>
    <svg class="ic"><use href="#lay"/></svg>
    <div class="combo w297 layc">
      <svg class="li"><use href="#bulb"/></svg><svg class="li"><use href="#sun"/></svg><svg class="li"><use href="#frz"/></svg><svg class="li"><use href="#lock"/></svg><i class="swatch"></i><span>0</span>
    </div>
    <svg class="ic m-l8"><use href="#lmk"/></svg><svg class="ic"><use href="#lprev"/></svg><svg class="ic"><use href="#lst"/></svg>
  </div>
  <div class="tb t-prop">
    <span class="grip"></span>
    <div class="combo w148 ltxt sq"><i class="swatch"></i><span>ByLayer</span></div><span class="dbl"></span>
    <div class="combo w158 lw"><i class="ln"></i><span>ByLayer</span></div><span class="dbl"></span>
    <div class="combo w124 lw"><i class="ln short"></i><span>ByLayer</span></div><span class="dbl"></span>
    <div class="combo w120 ltxt off"><span>ByColor</span></div>
  </div>
  <div class="tb t-nav">
    <span class="grip"></span>
    <svg class="ic"><use href="#pan2"/></svg><svg class="ic"><use href="#zm"/></svg><svg class="ic"><use href="#orb"/></svg><svg class="ic"><use href="#cam"/></svg><svg class="ic"><use href="#feet"/></svg><span class="sp"></span>
    <div class="combo wrest"></div>
  </div>
</div>

<main class="main">
  <aside class="dockl">
    <div class="vt">
      <div class="vh"></div>
      <svg class="ic"><use href="#line"/></svg><svg class="ic"><use href="#xline"/></svg><svg class="ic"><use href="#pline"/></svg><svg class="ic"><use href="#poly"/></svg><svg class="ic"><use href="#rect"/></svg><svg class="ic"><use href="#arc"/></svg><svg class="ic"><use href="#circ"/></svg><svg class="ic"><use href="#cloud"/></svg><svg class="ic"><use href="#spl"/></svg><svg class="ic"><use href="#ell"/></svg><svg class="ic"><use href="#earc"/></svg><svg class="ic"><use href="#ins"/></svg><svg class="ic"><use href="#mkb"/></svg><svg class="ic"><use href="#pt"/></svg><svg class="ic"><use href="#hat"/></svg><svg class="ic"><use href="#grd"/></svg><svg class="ic"><use href="#reg"/></svg><svg class="ic"><use href="#tab"/></svg>
      <span class="biga">A</span>
      <svg class="ic"><use href="#ad"/></svg>
    </div>
    <div class="vt">
      <div class="vh"></div>
      <svg class="ic"><use href="#m1"/></svg><svg class="ic"><use href="#box"/></svg><svg class="ic"><use href="#wdg"/></svg><svg class="ic"><use href="#cone"/></svg><svg class="ic"><use href="#spr"/></svg><svg class="ic"><use href="#cyl"/></svg><svg class="ic"><use href="#tor"/></svg><svg class="ic"><use href="#pyr"/></svg><svg class="ic"><use href="#hel"/></svg><svg class="ic"><use href="#psf"/></svg><div class="vs"></div>
      <svg class="ic"><use href="#prs"/></svg><svg class="ic"><use href="#ext"/></svg><svg class="ic"><use href="#swp"/></svg><svg class="ic"><use href="#rev"/></svg><svg class="ic"><use href="#lft"/></svg><div class="vs"></div>
      <svg class="ic"><use href="#uni"/></svg><svg class="ic"><use href="#sub"/></svg><svg class="ic"><use href="#its"/></svg><div class="vs"></div>
      <svg class="ic"><use href="#gz3"/></svg><svg class="ic"><use href="#gr3"/></svg><svg class="ic"><use href="#ply"/></svg><svg class="ic"><use href="#arr3"/></svg>
    </div>
  </aside>

  <section class="work">
    <div class="vprow">
      <div class="vp">
        <svg class="drawing" viewBox="59 101 1228 564">
          <g class="geo">
            <path d="M192.500 160v302l91 107.500h162l70-119h156V172"/>
            <path d="M283.500 172v397.500M445.500 182v387.500M515.500 182v268.500"/>
            <path d="M671.500 329.500h51M722.500 160v456.500h190V449.500h33"/>
            <path d="M192.500 163.500h530M283.500 175.500h388M445.500 186.500h70"/>
            <path d="M709 451.500h68M743.500 418v67"/>
            <rect x="741" y="449" width="5" height="5"/>
            <path d="M74.500 600v49M74.500 649.500h50M130 636l11 11M141 636l-11 11M78 583l4.500 6 4.500-6M82.500 589v6"/>
            <rect x="71" y="646" width="7" height="7"/>
          </g>
          <g class="arrow">
            <path d="M197 162h4v3h-4zM716 162h4v3h-4zM288 174h4v3h-4zM665 174h4v3h-4zM450 185h4v3h-4zM508 185h4v3h-4z"/>
          </g>
          <text class="dim" x="202" y="161">175,84</text>
          <text class="dim" x="623" y="172">128,84</text>
          <text class="dim" x="465" y="184">23,23</text>
        </svg>
        <div class="vplabel">[−][Top][2D Wireframe]</div>
        <div class="floatbar">
          <span class="grip"></span>
          <svg class="ic"><use href="#rc1"/></svg><svg class="ic"><use href="#rc2"/></svg><span class="sp"></span>
          <svg class="ic"><use href="#rc3"/></svg><svg class="ic"><use href="#rc4"/></svg><span class="sp"></span>
          <svg class="ic"><use href="#vp1"/></svg><svg class="ic"><use href="#vp2"/></svg>
          <span class="fx">×</span>
        </div>
      </div>
      <div class="vscroll"><span class="up"></span><span class="vthumb"></span><span class="down"></span></div>
    </div>
    <div class="tabs">
      <div class="navs"><span class="n first"></span><span class="n left"></span><span class="n right"></span><span class="n last"></span></div>
      <span class="tab act">Model</span><span class="tab">Layout1</span><span class="tab">Layout2</span>
      <div class="hscroll"><span class="hsplit"></span><span class="hthumb"></span><span class="hright"></span></div>
    </div>
  </section>

  <aside class="dockr">
    <div class="vt">
      <div class="vh"></div>
      <svg class="ic"><use href="#expl"/></svg><div class="vs"></div>
      <svg class="ic"><use href="#c1"/></svg><svg class="ic"><use href="#c2"/></svg><svg class="ic"><use href="#c3"/></svg><svg class="ic"><use href="#c4"/></svg><svg class="ic"><use href="#c5"/></svg><svg class="ic"><use href="#c6"/></svg><div class="vs"></div>
      <svg class="ic"><use href="#i1"/></svg><svg class="ic"><use href="#i2"/></svg><svg class="ic"><use href="#i3"/></svg><svg class="ic"><use href="#i4"/></svg><div class="vs"></div>
      <svg class="ic"><use href="#cam2"/></svg><div class="vs"></div>
      <svg class="ic"><use href="#navw"/></svg>
    </div>
    <div class="vcol">
      <div class="vt">
        <div class="vh"></div>
        <svg class="ic"><use href="#brsh"/></svg><svg class="ic"><use href="#cpy2"/></svg><svg class="ic"><use href="#mir"/></svg><svg class="ic"><use href="#ofs"/></svg><svg class="ic"><use href="#arry"/></svg><svg class="ic"><use href="#move"/></svg><svg class="ic"><use href="#rot"/></svg><svg class="ic"><use href="#scl"/></svg><svg class="ic"><use href="#str"/></svg><svg class="ic"><use href="#trm"/></svg><svg class="ic"><use href="#ex"/></svg><svg class="ic"><use href="#br1"/></svg><svg class="ic"><use href="#br2"/></svg><svg class="ic"><use href="#jn"/></svg><svg class="ic"><use href="#chm"/></svg><svg class="ic"><use href="#flt"/></svg><svg class="ic"><use href="#bln"/></svg><svg class="ic"><use href="#exb"/></svg>
      </div>
      <div class="vt">
        <div class="vh"></div>
        <svg class="ic"><use href="#o1"/></svg><svg class="ic"><use href="#o2"/></svg><svg class="ic"><use href="#o3"/></svg><svg class="ic"><use href="#o4"/></svg><div class="vs"></div>
        <svg class="ic"><use href="#abc"/></svg><svg class="ic"><use href="#msk"/></svg>
      </div>
    </div>
  </aside>
</main>

<section class="cmd">
  <div class="chandle"><span class="cdots"></span><span class="cx">✕</span></div>
  <div class="chist">
    <div>Specify dimension line position, or [Continuous/Staggered/Baseline/Ordinate/Radius/Diameter/datumPoint/Edit/seTtings] &lt;Continuous&gt;:staggered</div>
    <div>Specify dimension line position, or [Continuous/Staggered/Baseline/Ordinate/Radius/Diameter/datumPoint/Edit/seTtings] &lt;Staggered&gt;:</div>
  </div>
</section>
<section class="cinput">
  <div class="wrench"><svg class="wr" viewBox="0 0 20 20"><path d="M2 5l3 3 3-1 1-3-3-3c4-1 7 2 6 6l7 7c1 2-1 4-3 3l-7-7C5 11 1 9 2 5z" fill="#f2f2f2"/></svg></div>
  <div class="cfield"><svg class="ic"><use href="#cmd"/></svg><span class="dd gray tight"></span><span class="ph">Type a command</span></div>
</section>

<footer class="status">
  <div class="coords">302.2731, 175.1418, 0.0000</div>
  <div class="sbs">
    <span class="sb"><svg class="ic"><use href="#st1"/></svg></span><span class="sb"><svg class="ic"><use href="#st2"/></svg></span><span class="sb w"><svg class="ic"><use href="#st3"/></svg></span><span class="sb on"><svg class="ic"><use href="#st4"/></svg></span><span class="sb"><svg class="ic"><use href="#st5"/></svg></span><span class="sb on"><svg class="ic"><use href="#st6"/></svg></span><span class="sb"><svg class="ic"><use href="#st7"/></svg></span><span class="sb on"><svg class="ic"><use href="#st8"/></svg></span><span class="sb"><svg class="ic"><use href="#st9"/></svg></span><span class="sb on"><svg class="ic"><use href="#st10"/></svg></span><span class="sb"><svg class="ic"><use href="#st11"/></svg></span><span class="sb"><svg class="ic"><use href="#st12"/></svg></span><span class="sb"><svg class="ic"><use href="#st13"/></svg></span><span class="sb"><svg class="ic"><use href="#st14"/></svg></span><span class="sb"><svg class="ic"><use href="#st15"/></svg></span>
  </div>
  <div class="sright">
    <span class="sb model">MODEL</span><span class="sb"><svg class="ic"><use href="#s1"/></svg></span><span class="sb"><svg class="ic"><use href="#s2"/></svg></span>
    <span class="sgap"></span>
    <span class="sb scale"><svg class="ic"><use href="#an"/></svg><b>1:1</b><span class="dd"></span></span><span class="sb"><svg class="ic"><use href="#an2"/></svg></span><span class="sb"><svg class="ic"><use href="#an3"/></svg></span>
    <span class="sgap2"></span>
    <span class="sb"><svg class="ic"><use href="#gear"/></svg></span><span class="sb"><svg class="ic"><use href="#plk"/></svg></span><span class="sb"><svg class="ic"><use href="#hw"/></svg></span><span class="sb dark"><svg class="ic"><use href="#bulb2"/></svg></span><span class="sdd"><span class="dd"></span></span><span class="sb"><svg class="ic"><use href="#wnd"/></svg></span>
  </div>
</footer>

<div class="logo">
  <svg viewBox="0 0 40 40"><path d="M4 36L17 5h9l2 31h-6l-1-8h-8l-3 8z" fill="#c8141c"/><path d="M17 5h9l2 31h-6L19 12z" fill="#8d1016"/><path d="M15 22l4-10 1 10z" fill="#5a0a0e"/><path d="M4 36l9-8h8l1 8" fill="#e53038" opacity=".6"/><path d="M29 19h9l-4.500 5z" fill="#222"/></svg>
</div>

<svg class="notes" viewBox="0 0 1366 768" aria-hidden="true">
  <ellipse cx="465" cy="195.500" rx="342" ry="77"/>
  <ellipse class="small" cx="888" cy="717" rx="48" ry="22"/>
</svg>
</body>
</html>
```
FILE: styles.css
```css
* { box-sizing: border-box; }
html, body { margin: 0; padding: 0; }
body { position: relative; width: 1366px; height: 768px; overflow: hidden; background: #666; font: 11.600px "Noto Sans", "Liberation Sans", sans-serif; color: #111; display: flex; flex-direction: column; }
.defs { position: absolute; width: 0; height: 0; }
.svt { font-family: "Liberation Sans", sans-serif; }
.svm { font-family: "DejaVu Sans Mono", monospace; }
.ic { width: 20px; height: 20px; margin: 1px 1px 1px 2px; flex: none; fill: none; stroke: #3a3f45; stroke-width: 1; display: block; }

.title { height: 24px; display: flex; flex: none; border-bottom: 1px solid #333; }
.qat { width: 468px; padding-left: 46px; display: flex; align-items: center; background: linear-gradient(#5f5f5f, #8b8b8b); }
.qat .ic { margin: 0 2px; }
.qat .dd { width: 11px; }
.qat .dd::after { left: 2px; }
.dd { width: 13px; height: 20px; flex: none; position: relative; display: block; }
.dd::after { content: ""; position: absolute; left: 3px; top: 8px; border: 3.500px solid transparent; border-top: 4px solid #222; border-bottom: 0; }
.dd.light::after { border-top-color: #c8c8c8; }
.dd.gray::after { border-top-color: #aaa; }
.combo { height: 21px; display: flex; align-items: center; flex: none; position: relative; border: 1px solid #b5b5b5; border-radius: 3px; background: linear-gradient(#fbfbfb, #d4d4d4); color: #111; white-space: nowrap; padding-right: 18px; }
.combo::after { content: ""; position: absolute; right: 5px; top: 7px; border: 4px solid transparent; border-top: 5px solid #111; border-bottom: 0; }
.wsq { width: 179px; margin-left: 2px; height: 22px; background: linear-gradient(#ccc, #ededed); color: #111; }
.wsq .ic { margin: 0 1px 0 1px; }
.qcust { flex: none; width: 8px; height: 22px; margin-left: 1px; background: linear-gradient(#333 0 2px, transparent 2px 6px, #222 6px 8px, transparent 8px); background-size: 6px 12px; background-repeat: no-repeat; background-position: 1px 5px; }
.doc { width: 332px; background: #fff; display: flex; gap: 13px; padding-left: 83px; align-items: center; color: #222; }
.sarrow { width: 13px; background: linear-gradient(#6b6b6b, #8a8a8a); position: relative; }
.sarrow::after { content: ""; position: absolute; left: 4px; top: 8px; border: 4px solid transparent; border-left: 5px solid #111; border-right: 0; }
.search { width: 180px; background: #f8f8f8; color: #888; font-style: italic; font-size: 12.700px; padding-left: 4px; line-height: 23px; border-right: 1px solid #777; white-space: nowrap; overflow: hidden; }
.info { width: 250px; display: flex; align-items: center; background: linear-gradient(#6b6b6b, #8e8e8e); padding-left: 2px; color: #eee; }
.info .ic { margin: 0 2px; }
.signin { width: 91px; padding-left: 0; font-size: 12px; }
.gapa { margin-right: 2px; }
.vsep { width: 1px; height: 18px; background: #777; margin: 0 3px 0 3px; }
.win { width: 123px; background: #fff; padding: 0 5px 6px 17px; }
.winbox { height: 17px; border: 1px solid #cfd9e0; border-top: 0; border-radius: 0 0 5px 5px; display: flex; background: linear-gradient(90deg, #fff, #eaf6fa 50%, #e6f9fb 75%, #fff); position: relative; }
.wmin { width: 11px; height: 5px; margin: 7px 0 0 9px; border: 1px solid #555; background: #ddd; }
.wres { width: 11px; height: 11px; margin: 2px 0 0 15px; border: 1px solid #555; box-shadow: 2px -2px 0 -1px #fff, 2px -2px 0 0 #555; }
.wcls { margin: 0 0 0 25px; font: 700 13px/15px "DejaVu Sans", sans-serif; color: #777; }

.menu { height: 21px; flex: none; display: flex; align-items: center; gap: 23px; padding-left: 55px; background: linear-gradient(#5a5a5a, #8a8a8a); color: #e6e6e6; position: relative; }
.mdi { margin-left: auto; display: flex; align-items: center; gap: 7px; padding-right: 3px; color: #111; }
.mmin { width: 10px; height: 2px; background: #222; margin-top: 8px; }
.mres { width: 12px; height: 9px; border: 1px solid #222; box-shadow: 3px -3px 0 -1px #777, 3px -3px 0 0 #222; margin-top: 3px; }
.mcls { font-size: 12px; font-weight: 700; color: #111; margin-left: 4px; }

.row { display: flex; flex: none; }
.r1 { height: 23px; margin-top: 1px; }
.r2 { height: 24px; margin-top: 3px; }
.tb { display: flex; align-items: center; background: #ececec; height: 100%; flex: none; border-right: 1px solid #444; }
.grip { width: 8px; height: 100%; flex: none; background: #555 conic-gradient(#aaa 25%, transparent 0) 2px 2px / 2px 2px; border-right: 1px solid #444; }
.sp { width: 6px; height: 100%; flex: none; background: linear-gradient(#8a8a8a, #8a8a8a) center / 1px 18px no-repeat; }
.dbl { width: 7px; height: 100%; flex: none; background: linear-gradient(90deg, #999 1px, transparent 1px 3px, #999 3px 4px, transparent 4px) 2px center / 6px 20px no-repeat; }
.t-std { width: 645px; }
.t-sty { margin-left: 3px; width: 598px; }
.t-sty .ic { margin: 1px 2px; width: 20px; }
.t-vis { margin-left: 3px; flex: 1; overflow: hidden; border-right: 0; }
.t-vis .ic { margin: 1px; }
.w117 { width: 117px; }
.w118 { width: 118px; }
.ctr { justify-content: center; }
.pr32 { padding-right: 32px; }
.pr48 { padding-right: 48px; }
.ltxt { padding-left: 10px; }
.t4 { padding-left: 4px; }
.t-ws { width: 229px; }
.w173 { width: 173px; margin-left: 2px; }
.big { padding-left: 8px; color: #1a1a2a; }
.m-l { margin-left: 1px; }
.t-lay { margin-left: 3px; width: 398px; }
.t-lay .ic { margin: 1px; }
.w297 { width: 297px; margin-left: 2px; padding-left: 2px; gap: 1px; }
.li { width: 16px; height: 20px; flex: none; fill: none; stroke: #444; }
.swatch { width: 10px; height: 10px; border: 1px solid #111; background: #fff; flex: none; display: block; margin: 0 5px 0 1px; }
.m-l8 { margin-left: 0; }
.t-prop { margin-left: 3px; width: 582px; }
.w148 { width: 148px; margin-left: 2px; padding-left: 6px; }
.w158 { width: 158px; }
.w124 { width: 124px; }
.w120 { width: 120px; color: #8a8a8a; background: linear-gradient(#f6f6f6, #e6e6e6); }
.w120::after { border-top-color: #aaa; }
.lw { padding-left: 4px; }
.ln { width: 60px; height: 1px; background: #111; margin-right: 5px; display: block; flex: none; }
.ln.short { width: 36px; margin-right: 4px; }
.t-nav { margin-left: 2px; flex: 1; overflow: hidden; border-right: 0; }
.wrest { width: 30px; }

.main { height: 584px; margin-top: 4px; display: flex; flex: none; }
.dockl { width: 58px; display: flex; gap: 4px; padding: 1px 0 0 1px; align-items: flex-start; flex: none; }
.dockr { display: flex; gap: 5px; padding: 1px 0 0 5px; align-items: flex-start; flex: none; }
.vcol { display: flex; flex-direction: column; gap: 2px; }
.vt { width: 24px; background: #ececec; border: 0; display: flex; flex-direction: column; flex: none; box-shadow: 1px 1px 0 #333; }
.vt .ic { margin: 1px 2px; }
.vh { height: 8px; background: #555; display: flex; justify-content: center; align-items: center; }
.vh::before { content: ""; width: 14px; height: 4px; background: conic-gradient(#aaa 25%, transparent 0) 0 0 / 2px 2px; }
.vs { height: 6px; background: linear-gradient(#999, #999) center / 20px 1px no-repeat; }
.biga { height: 22px; text-align: center; font: 700 21px/22px "Liberation Sans", sans-serif; color: #222; }

.work { width: 1247px; display: flex; flex-direction: column; flex: none; border-top: 1px solid #aaa; }
.vprow { height: 565px; display: flex; flex: none; }
.vp { width: 1229px; background: #212830; position: relative; overflow: hidden; border-left: 1px solid #e8e8e8; }
.drawing { position: absolute; left: 0; top: 0; width: 1228px; height: 564px; }
.geo { fill: none; stroke: #fff; stroke-width: 1; }
.arrow path { fill: #fff; }
.dim { fill: #fff; font: 11px "DejaVu Sans Mono", monospace; letter-spacing: -.2px; }
.vplabel { position: absolute; left: 5px; top: 6px; color: #e6e6e6; line-height: 16px; }
.floatbar { position: absolute; left: 14px; top: 21px; width: 165px; height: 22px; display: flex; align-items: center; background: #ececec; }
.floatbar .grip { margin-right: -1px; }
.fx { position: absolute; right: 0; top: 0; width: 8px; height: 22px; background: #444; color: #fff; font-size: 12px; line-height: 10px; text-align: center; font-weight: 700; }
.vscroll { width: 18px; background: #f3f3f3; position: relative; flex: none; border-left: 1px solid #fff; }
.up, .down { position: absolute; left: 4px; border: 4px solid transparent; }
.up { top: 8px; border-bottom: 4px solid #333; border-top: 0; }
.down { bottom: 3px; border-top: 4px solid #333; border-bottom: 0; }
.vthumb { position: absolute; left: 2px; top: 268px; width: 14px; height: 15px; border: 1px solid #bbb; border-radius: 2px; background: linear-gradient(90deg, #f6f6f6, #c8c8c8); }
.tabs { height: 18px; background: #f5f5f5; display: flex; align-items: center; position: relative; flex: none; padding-left: 2px; font-size: 10.500px; }
.navs { display: flex; width: 60px; flex: none; }
.n { width: 15px; height: 14px; position: relative; border-right: 1px solid #bbb; }
.n::after { content: ""; position: absolute; top: 3px; border: 4px solid transparent; }
.left::after, .first::after { left: 3px; border-right: 5px solid #444; border-left: 0; }
.right::after, .last::after { left: 5px; border-left: 5px solid #444; border-right: 0; }
.first::before { content: ""; position: absolute; left: 2px; top: 3px; width: 1px; height: 8px; background: #444; }
.last::before { content: ""; position: absolute; right: 2px; top: 3px; width: 1px; height: 8px; background: #444; }
.tab { height: 18px; line-height: 17px; position: relative; color: #111; flex: none; width: 55px; text-align: center; }
.tab::after { content: ""; position: absolute; right: 0; top: 1px; bottom: 1px; width: 1px; background: #555; transform: skewX(-22deg); }
.tab.act { background: #212830; color: #fff; clip-path: polygon(4px 0, 100% 0, calc(100% - 6px) 100%, 8px 100%); width: 46px; margin-left: 3px; }
.hscroll { flex: 1; height: 100%; position: relative; }
.hsplit { position: absolute; left: 591px; top: 2px; width: 5px; height: 13px; border: 1px solid #bbb; background: #fff; }
.hthumb { position: absolute; left: 876px; top: 1px; width: 15px; height: 14px; border: 1px solid #bbb; border-radius: 2px; background: linear-gradient(#f6f6f6, #c6c6c6); }
.hright { position: absolute; left: 999px; top: 5px; border: 4px solid transparent; border-left: 4px solid #333; border-right: 0; }

.cmd { height: 34px; margin-top: 4px; display: flex; flex: none; }
.chandle { width: 23px; background: #555; display: flex; flex-direction: column; align-items: center; padding-top: 3px; color: #eee; }
.cdots { width: 18px; height: 5px; background: conic-gradient(#aaa 25%, transparent 0) 0 0 / 2px 2px; }
.cx { font-size: 11px; font-weight: 700; margin-top: 7px; line-height: 12px; }
.chist { flex: 1; background: #c4c4c4; border-bottom: 1px solid #777; padding: 2px 0 0 2px; font: 11.500px/15px "DejaVu Sans Mono", monospace; letter-spacing: .08px; color: #111; white-space: nowrap; }
.cinput { height: 22px; display: flex; flex: none; }
.wrench { width: 23px; background: #444; display: flex; align-items: center; justify-content: center; }
.wr { width: 14px; height: 14px; }
.cfield { flex: 1; background: #fff; display: flex; align-items: center; padding-left: 3px; }
.tight { width: 10px; }
.ph { font: italic 11.500px "DejaVu Sans Mono", monospace; color: #999; margin-left: 1px; }

.status { height: 22px; margin-top: 2px; flex: none; display: flex; background: linear-gradient(#8e8e8e, #6d6d6d); border-top: 1px solid #333; }
.coords { width: 173px; padding-left: 13px; line-height: 21px; color: #111; }
.sbs, .sright { display: flex; }
.sb { width: 22px; height: 21px; flex: none; border-left: 1px solid #666; background: linear-gradient(#d6d6d6, #a5a5a5); display: flex; align-items: center; justify-content: center; }
.sb .ic { margin: 0; width: 18px; height: 18px; }
.sb.on { background: linear-gradient(#fdfdfd, #92c3d3); }
.sb.w { background: linear-gradient(#e6e6e6, #c6c6c6); }
.sright { margin-left: auto; }
.model { width: 43px; }
.sgap { width: 13px; background: #8a8a8a; }
.scale { width: 46px; gap: 2px; }
.scale b { font-weight: 400; }
.scale .dd { width: 10px; }
.scale .dd::after { left: 1px; }
.sgap2 { width: 7px; background: #777; }
.dark { width: 31px; background: linear-gradient(#888, #9a9a9a); }
.sdd { width: 18px; background: linear-gradient(#d6d6d6, #a5a5a5); display: flex; align-items: center; justify-content: center; border-left: 1px solid #666; }
.sdd .dd::after { left: 2px; }

.logo { position: absolute; left: 0; top: 0; width: 41px; height: 41px; background: linear-gradient(#7a7a7a, #9b9b9b); border: 1px solid #333; }
.logo svg { display: block; width: 39px; height: 39px; }
.notes { position: absolute; left: 0; top: 0; width: 1366px; height: 768px; pointer-events: none; fill: none; stroke: #ed1c24; stroke-width: 5; }
.notes .small { stroke-width: 4; }
```
